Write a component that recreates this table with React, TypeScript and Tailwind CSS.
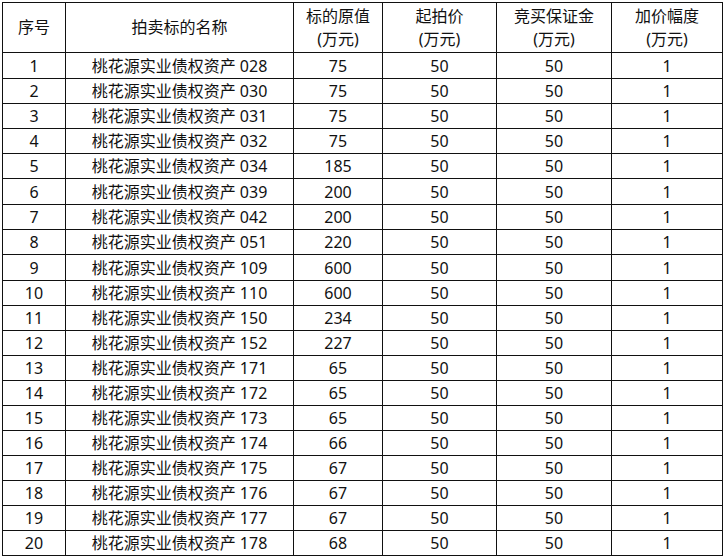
import React from 'react';

interface Lot {
  no: number;
  code: string;
  value: number;
}

const lots: Lot[] = [
  { no: 1, code: '028', value: 75 },
  { no: 2, code: '030', value: 75 },
  { no: 3, code: '031', value: 75 },
  { no: 4, code: '032', value: 75 },
  { no: 5, code: '034', value: 185 },
  { no: 6, code: '039', value: 200 },
  { no: 7, code: '042', value: 200 },
  { no: 8, code: '051', value: 220 },
  { no: 9, code: '109', value: 600 },
  { no: 10, code: '110', value: 600 },
  { no: 11, code: '150', value: 234 },
  { no: 12, code: '152', value: 227 },
  { no: 13, code: '171', value: 65 },
  { no: 14, code: '172', value: 65 },
  { no: 15, code: '173', value: 65 },
  { no: 16, code: '174', value: 66 },
  { no: 17, code: '175', value: 67 },
  { no: 18, code: '176', value: 67 },
  { no: 19, code: '177', value: 67 },
  { no: 20, code: '178', value: 68 },
];

const cell = 'flex items-center justify-center bg-white text-center';

// 两行表头
function HeadCell({ top, bottom }: { top: string; bottom?: string }) {
  return (
    <div className={`${cell} flex-col leading-[23px]`}>
      <span>{top}</span>
      {bottom && <span>{bottom}</span>}
    </div>
  );
}

export default function App() {
  return (
    <div
      className="h-[560px] w-[726px] overflow-hidden bg-white pt-[2px] pl-[2px] text-[16px] text-[#111]"
      style={{ fontFamily: '"Noto Sans", "Noto Sans CJK SC", sans-serif' }}
    >
      <div className="grid w-max grid-cols-[62px_227px_88px_113px_114px_110px] grid-rows-[49px_25px_24px_24px_24px_24px_25px_24px_24px_25px_24px_24px_24px_24px_24px_24px_24px_24px_24px_24px_24px] gap-px bg-[#111] p-px">
        <HeadCell top="序号" />
        <HeadCell top="拍卖标的名称" />
        <HeadCell top="标的原值" bottom="(万元)" />
        <HeadCell top="起拍价" bottom="(万元)" />
        <HeadCell top="竞买保证金" bottom="(万元)" />
        <HeadCell top="加价幅度" bottom="(万元)" />

        {lots.map((lot) => (
          <React.Fragment key={lot.no}>
            <div className={cell}>{lot.no}</div>
            <div className={cell}>桃花源实业债权资产 {lot.code}</div>
            <div className={cell}>{lot.value}</div>
            <div className={cell}>50</div>
            <div className={cell}>50</div>
            <div className={cell}>1</div>
          </React.Fragment>
        ))}
      </div>
    </div>
  );
}
